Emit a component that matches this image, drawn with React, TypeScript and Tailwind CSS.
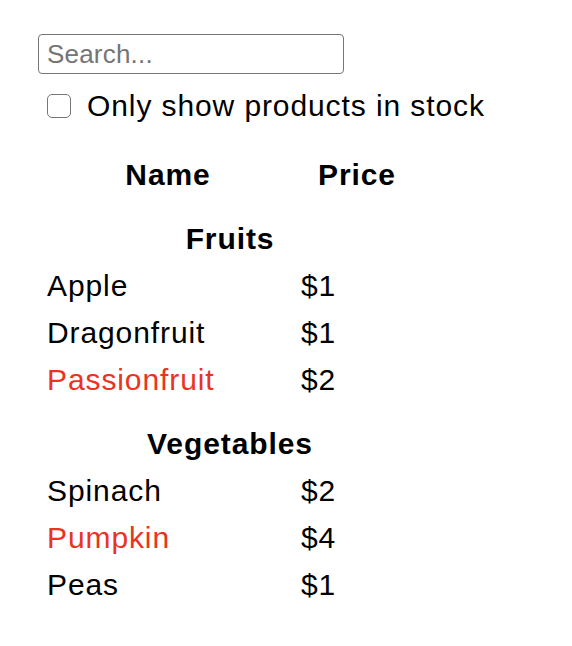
import { useState } from "react"

type Product = { category: string; price: string; stocked: boolean; name: string }

const PRODUCTS: Product[] = [
  { category: "Fruits", price: "$1", stocked: true, name: "Apple" },
  { category: "Fruits", price: "$1", stocked: true, name: "Dragonfruit" },
  { category: "Fruits", price: "$2", stocked: false, name: "Passionfruit" },
  { category: "Vegetables", price: "$2", stocked: true, name: "Spinach" },
  { category: "Vegetables", price: "$4", stocked: false, name: "Pumpkin" },
  { category: "Vegetables", price: "$1", stocked: true, name: "Peas" },
]

function ProductTable({ products, filterText, inStockOnly }: { products: Product[]; filterText: string; inStockOnly: boolean }) {
  const rows: JSX.Element[] = []
  let lastCategory: string | null = null

  products.forEach((p) => {
    if (!p.name.toLowerCase().includes(filterText.toLowerCase())) return
    if (inStockOnly && !p.stocked) return
    if (p.category !== lastCategory) {
      rows.push(
        <div key={"c-" + p.category} className="col-span-2 mt-[17px] flex h-[47px] items-center justify-center font-bold">
          {p.category}
        </div>
      )
    }
    rows.push(
      <div key={p.name} className={"flex h-[47px] items-center " + (p.stocked ? "" : "text-[#ea3323]")}>
        {p.name}
      </div>
    )
    rows.push(
      <div key={p.name + "-price"} className="flex h-[47px] items-center">
        {p.price}
      </div>
    )
    lastCategory = p.category
  })

  return (
    <div className="ml-[9px] mt-[29px] grid grid-cols-[242px_112px] gap-x-[12px]">
      <div className="flex h-[47px] items-center justify-center font-bold">Name</div>
      <div className="flex h-[47px] items-center justify-center font-bold">Price</div>
      {rows}
    </div>
  )
}

export default function App() {
  const [filterText, setFilterText] = useState("")
  const [inStockOnly, setInStockOnly] = useState(false)

  return (
    <div className="min-h-[646px] bg-white pl-[38px] pt-[34px] font-['Liberation_Sans',Arial,sans-serif] text-[30px] leading-none tracking-[0.9px] text-black">
      <form>
        <input
          type="text"
          value={filterText}
          placeholder="Search..."
          onChange={(e) => setFilterText(e.target.value)}
          className="block h-[40px] w-[306px] rounded-[4px] border-[1.5px] border-[#767676] px-[8px] text-[26px] tracking-[0.2px] outline-none placeholder:text-[#757575]"
        />
        <label className="mt-[16px] flex h-[32px] items-center">
          <input
            type="checkbox"
            checked={inStockOnly}
            onChange={(e) => setInStockOnly(e.target.checked)}
            className="ml-[9px] h-[24px] w-[24px] appearance-none rounded-[5px] border-[1.5px] border-[#767676] bg-white checked:bg-[#0075ff]"
          />
          <span className="ml-[16px]">Only show products in stock</span>
        </label>
      </form>
      <ProductTable products={PRODUCTS} filterText={filterText} inStockOnly={inStockOnly} />
    </div>
  )
}
